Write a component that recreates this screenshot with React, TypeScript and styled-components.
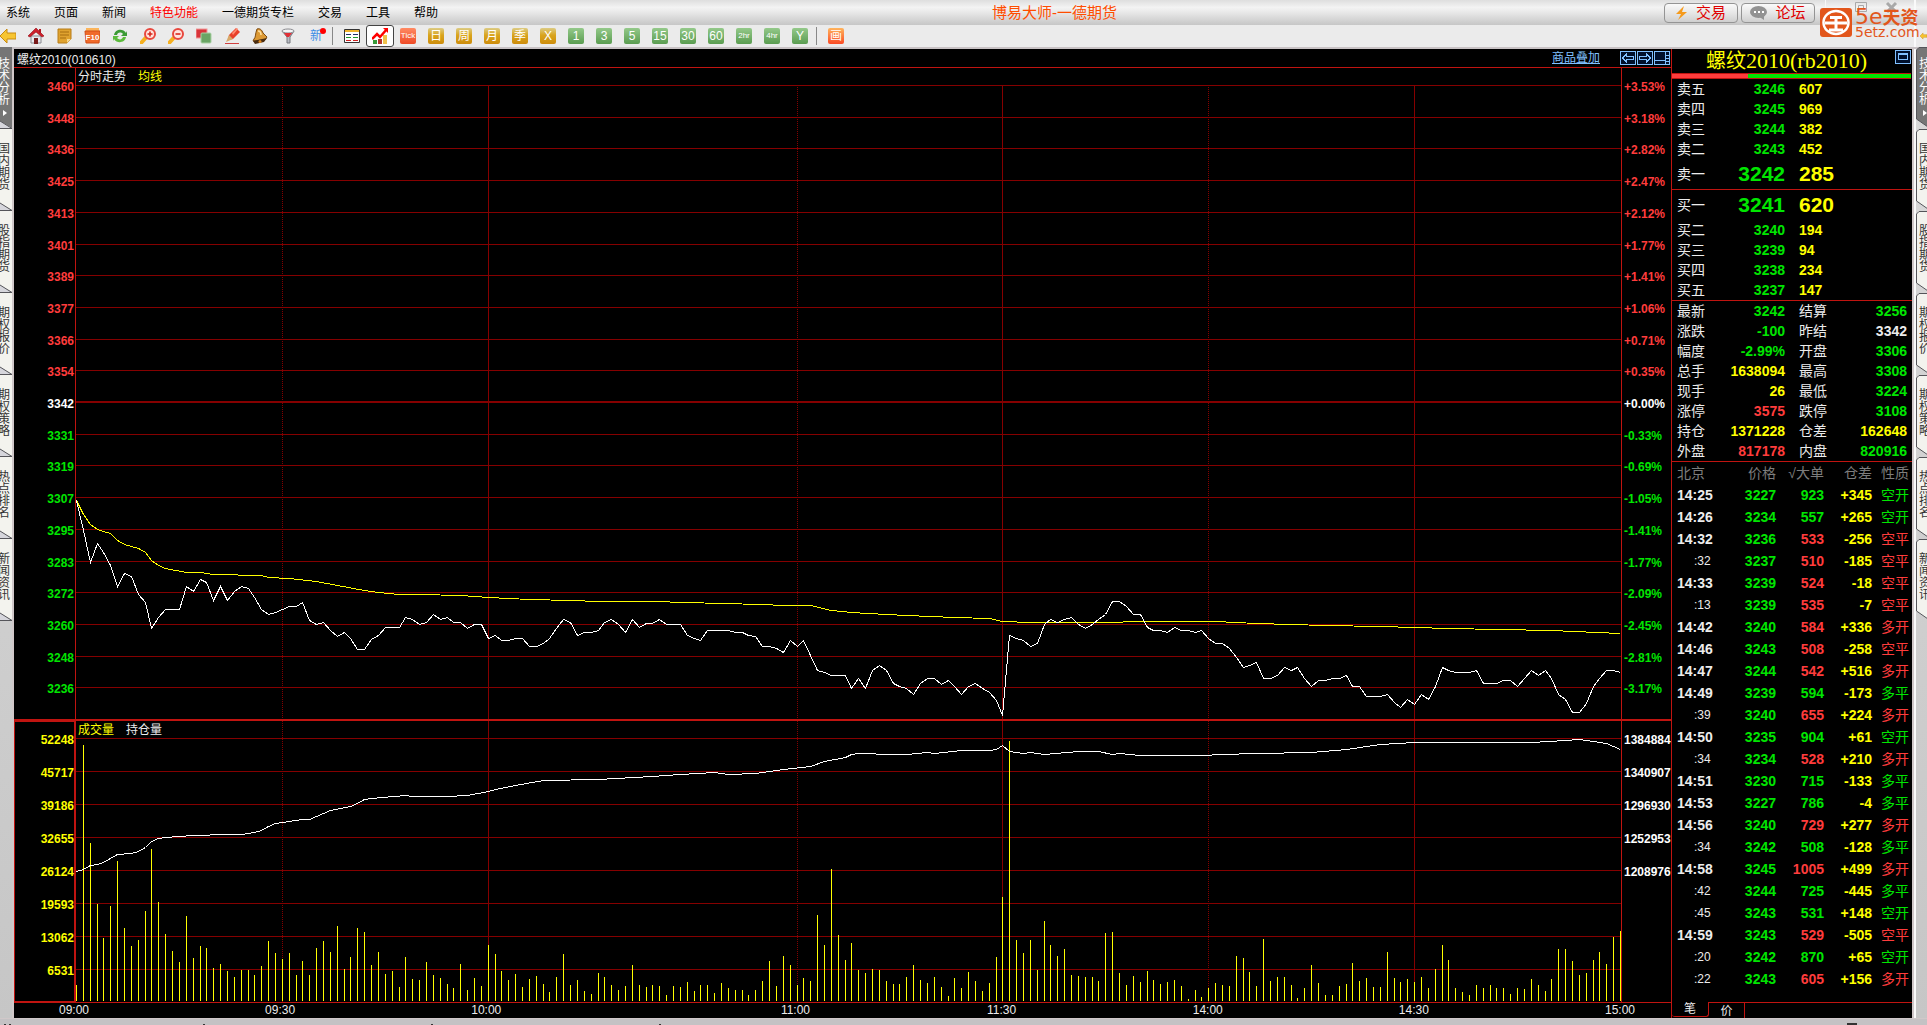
import React from "react";
import styled, { createGlobalStyle, css } from "styled-components";

const RED = "#ff3c3c";
const GREEN = "#00e600";
const YELLOW = "#ffff00";
const WHITE = "#ececec";
const LINE = "#c01410";
const GRID = "#850000";

/* ---------- data ---------- */

const menus = ["系统", "页面", "新闻", "特色功能", "一德期货专栏", "交易", "工具", "帮助"];
const sideTabs = ["技术分析", "国内期货", "股指期货", "期权报价", "期权策略", "热点排名", "新闻资讯"];

const priceLabels = [
  3460, 3448, 3436, 3425, 3413, 3401, 3389, 3377, 3366, 3354, 3342, 3331, 3319, 3307, 3295, 3283,
  3272, 3260, 3248, 3236,
];
const percentLabels = [
  "+3.53%", "+3.18%", "+2.82%", "+2.47%", "+2.12%", "+1.77%", "+1.41%", "+1.06%", "+0.71%",
  "+0.35%", "+0.00%", "-0.33%", "-0.69%", "-1.05%", "-1.41%", "-1.77%", "-2.09%", "-2.45%",
  "-2.81%", "-3.17%",
];
const volumeLabels = [52248, 45717, 39186, 32655, 26124, 19593, 13062, 6531];
const interestLabels = [1384884, 1340907, 1296930, 1252953, 1208976];

const MINUTES = 225;
const timeMarks: { minute: number; label: string }[] = [
  { minute: 0, label: "09:00" },
  { minute: 30, label: "09:30" },
  { minute: 60, label: "10:00" },
  { minute: 105, label: "11:00" },
  { minute: 135, label: "11:30" },
  { minute: 165, label: "14:00" },
  { minute: 195, label: "14:30" },
  { minute: 225, label: "15:00" },
];

const priceLine = [
  500, 530, 562, 543, 552, 565, 586, 573, 576, 594, 602, 628, 617, 609, 609, 609, 586, 591, 579,
  582, 600, 586, 600, 591, 586, 588, 597, 609, 614, 612, 609, 606, 606, 602, 620, 624, 622, 630,
  636, 632, 638, 649, 649, 639, 635, 627, 627, 627, 617, 619, 624, 622, 614, 619, 617, 622, 622,
  628, 624, 624, 638, 635, 640, 640, 638, 638, 646, 646, 643, 638, 628, 619, 622, 635, 632, 632,
  630, 622, 619, 624, 632, 619, 627, 623, 623, 619, 624, 624, 624, 635, 638, 640, 630, 630, 630,
  630, 632, 632, 635, 636, 646, 646, 648, 652, 640, 646, 640, 655, 670, 672, 675, 675, 675, 688,
  678, 688, 670, 665, 670, 683, 686, 688, 694, 683, 678, 678, 684, 680, 686, 694, 686, 683, 688,
  692, 700, 715, 635, 638, 640, 646, 643, 624, 619, 622, 619, 617, 624, 628, 624, 619, 614, 601,
  601, 606, 614, 614, 627, 630, 630, 632, 627, 630, 630, 632, 630, 638, 643, 643, 648, 657, 667,
  665, 662, 678, 678, 675, 667, 670, 667, 678, 686, 680, 680, 678, 678, 675, 686, 686, 696, 696,
  696, 694, 702, 707, 699, 704, 694, 699, 686, 667, 670, 672, 672, 672, 670, 683, 683, 683, 680,
  680, 686, 678, 670, 675, 670, 678, 694, 699, 712, 712, 703, 686, 678, 670, 670, 672,
];

const averageLine: [number, number][] = [
  [0, 500], [1, 514], [2, 524], [3, 529], [4, 531], [5, 533], [6, 540], [7, 544], [8, 546],
  [9, 548], [10, 552], [11, 560], [12, 565], [13, 568], [16, 572], [18, 572], [20, 574], [27, 575],
  [28, 577], [31, 578], [35, 581], [38, 585], [42, 590], [44, 592], [47, 594], [50, 594],
  [56, 595], [60, 597], [66, 599], [72, 600], [76, 601], [84, 601], [94, 603], [100, 604],
  [103, 605], [107, 605], [110, 610], [113, 612], [118, 614], [121, 615], [128, 617], [133, 618],
  [135, 621], [139, 622], [152, 622], [153, 621], [166, 621], [172, 623], [182, 625], [190, 626],
  [200, 628], [215, 630], [225, 633],
];

const interestLine: [number, number][] = [
  [0, 871], [1, 869], [2, 865], [3, 864], [4, 862], [5, 858], [6, 854], [8, 853], [9, 851],
  [10, 847], [11, 841], [12, 838], [13, 837], [15, 836], [17, 835], [19, 835], [20, 834],
  [24, 834], [26, 832], [27, 830], [28, 826], [29, 823], [30, 822], [33, 819], [34, 819],
  [35, 816], [37, 810], [40, 806], [41, 803], [42, 799], [43, 798], [48, 795], [49, 796],
  [54, 796], [57, 795], [60, 791], [61, 789], [64, 785], [68, 780], [76, 779], [84, 776],
  [88, 774], [93, 772], [95, 774], [99, 773], [103, 769], [107, 766], [109, 761], [112, 757],
  [113, 754], [114, 753], [116, 753], [117, 754], [121, 754], [124, 752], [125, 753], [129, 750],
  [133, 750], [134, 749], [135, 745], [136, 751], [138, 753], [139, 752], [141, 754], [146, 751],
  [149, 751], [151, 754], [152, 753], [155, 755], [164, 755], [167, 754], [172, 753], [180, 752],
  [185, 749], [190, 744], [195, 742], [206, 742], [212, 742], [217, 740], [219, 739], [221, 741],
  [223, 743], [224, 746], [225, 749],
];

const volumes = [
  16, 256, 158, 97, 63, 95, 140, 73, 55, 61, 90, 152, 99, 67, 50, 39, 85, 43, 55, 53, 33, 37, 30,
  24, 31, 31, 26, 35, 60, 48, 42, 48, 26, 40, 26, 53, 60, 49, 75, 32, 44, 73, 69, 36, 49, 27, 30,
  14, 44, 22, 21, 39, 26, 23, 17, 13, 37, 11, 23, 15, 56, 47, 30, 21, 27, 14, 22, 25, 17, 9, 24,
  47, 16, 21, 10, 7, 28, 24, 16, 11, 15, 36, 16, 14, 16, 15, 6, 15, 14, 19, 10, 16, 16, 8, 18, 13,
  11, 11, 6, 11, 20, 40, 15, 45, 36, 16, 23, 20, 86, 56, 132, 66, 41, 58, 31, 28, 32, 31, 20, 17,
  17, 24, 36, 21, 18, 24, 14, 5, 23, 13, 29, 20, 10, 18, 44, 104, 260, 61, 48, 61, 31, 80, 56, 45,
  52, 26, 25, 24, 24, 20, 68, 69, 28, 16, 25, 19, 30, 21, 17, 19, 21, 15, 2, 11, 4, 13, 18, 16,
  15, 45, 43, 29, 15, 62, 20, 24, 24, 16, 3, 13, 36, 18, 6, 6, 15, 17, 38, 20, 23, 14, 14, 49, 23,
  19, 22, 19, 24, 13, 32, 56, 41, 13, 9, 6, 16, 13, 16, 13, 13, 7, 13, 12, 22, 16, 10, 22, 52, 52,
  40, 26, 28, 41, 49, 37, 64, 70,
];

const asks: [string, number, number][] = [
  ["卖五", 3246, 607],
  ["卖四", 3245, 969],
  ["卖三", 3244, 382],
  ["卖二", 3243, 452],
  ["卖一", 3242, 285],
];
const bids: [string, number, number][] = [
  ["买一", 3241, 620],
  ["买二", 3240, 194],
  ["买三", 3239, 94],
  ["买四", 3238, 234],
  ["买五", 3237, 147],
];

type Stat = [string, string, string, string, string, string];
const stats: Stat[] = [
  ["最新", "3242", GREEN, "结算", "3256", GREEN],
  ["涨跌", "-100", GREEN, "昨结", "3342", WHITE],
  ["幅度", "-2.99%", GREEN, "开盘", "3306", GREEN],
  ["总手", "1638094", YELLOW, "最高", "3308", GREEN],
  ["现手", "26", YELLOW, "最低", "3224", GREEN],
  ["涨停", "3575", RED, "跌停", "3108", GREEN],
  ["持仓", "1371228", YELLOW, "仓差", "162648", YELLOW],
  ["外盘", "817178", RED, "内盘", "820916", GREEN],
];

type Tick = [string, number, number, string, string, string];
const ticks: Tick[] = [
  ["14:25", 3227, 923, "+345", "空开", GREEN],
  ["14:26", 3234, 557, "+265", "空开", GREEN],
  ["14:32", 3236, 533, "-256", "空平", RED],
  [":32", 3237, 510, "-185", "空平", RED],
  ["14:33", 3239, 524, "-18", "空平", RED],
  [":13", 3239, 535, "-7", "空平", RED],
  ["14:42", 3240, 584, "+336", "多开", RED],
  ["14:46", 3243, 508, "-258", "空平", RED],
  ["14:47", 3244, 542, "+516", "多开", RED],
  ["14:49", 3239, 594, "-173", "多平", GREEN],
  [":39", 3240, 655, "+224", "多开", RED],
  ["14:50", 3235, 904, "+61", "空开", GREEN],
  [":34", 3234, 528, "+210", "多开", RED],
  ["14:51", 3230, 715, "-133", "多平", GREEN],
  ["14:53", 3227, 786, "-4", "多平", GREEN],
  ["14:56", 3240, 729, "+277", "多开", RED],
  [":34", 3242, 508, "-128", "多平", GREEN],
  ["14:58", 3245, 1005, "+499", "多开", RED],
  [":42", 3244, 725, "-445", "多平", GREEN],
  [":45", 3243, 531, "+148", "空开", GREEN],
  ["14:59", 3243, 529, "-505", "空平", RED],
  [":20", 3242, 870, "+65", "空开", GREEN],
  [":22", 3243, 605, "+156", "多开", RED],
];

/* ---------- page frame ---------- */

const GlobalStyle = createGlobalStyle`
  * { box-sizing: border-box; }
  body {
    margin: 0;
    overflow: hidden;
    font-family: "Liberation Sans", "Noto Sans CJK SC", sans-serif;
    font-size: 12px;
    background: #d2d2d2;
  }
  button {
    font: inherit;
    color: inherit;
    background: none;
    border: 0;
    padding: 0;
    cursor: pointer;
  }
  ul, ol, h1, h2 { margin: 0; padding: 0; list-style: none; font-weight: normal; }
`;

const Page = styled.div`
  height: 100vh;
  display: flex;
  flex-direction: column;
`;

const MenuBar = styled.header`
  position: relative;
  height: 25px;
  flex: none;
  display: grid;
  grid-template-columns: 1fr auto 1fr;
  align-items: center;
  padding: 0 112px 0 6px;
  background: linear-gradient(#dedede, #f3f3f3 30%, #e9e9e9 48%, #c6c6c6);
`;

const Menu = styled.nav`
  display: flex;
  gap: 24px;
`;

const MenuItem = styled.button<{ $hot?: boolean }>`
  line-height: 24px;
  color: ${(p) => (p.$hot ? "#ff0000" : "#000")};
`;

const WindowTitle = styled.h1`
  padding-left: 288px;
  font-size: 15px;
  line-height: 24px;
  color: #ff4d00;
`;

const HeaderActions = styled.div`
  display: flex;
  justify-content: flex-end;
  gap: 3px;
`;

const ActionButton = styled.button`
  width: 74px;
  height: 20px;
  display: flex;
  align-items: center;
  justify-content: center;
  gap: 8px;
  border: 1px solid #949494;
  border-radius: 4px;
  background: linear-gradient(#fafafa, #e6e6e6 50%, #cfcfcf);
  color: #e00000;
  font-size: 15px;
  line-height: 18px;
`;

const WindowControls = styled.div`
  position: absolute;
  top: 0;
  right: 11px;
  display: flex;
  padding: 1px 14px 0 24px;
  border-left: 1px solid #f8f8f8;
  border-right: 2px solid #fafafa;
  height: 25px;
`;

const Brand = styled.div`
  position: absolute;
  z-index: 2;
  top: 8px;
  right: 4px;
  display: flex;
  gap: 3px;
  color: #e2561b;
`;

const BrandText = styled.div`
  width: 68px;
  white-space: nowrap;
`;

const BrandName = styled.div`
  display: flex;
  align-items: center;
  height: 17px;
  font: bold 18px/17px "Noto Sans CJK SC", sans-serif;
`;

const BrandMark = styled.span`
  font: 22px/17px "DejaVu Sans", sans-serif;
`;

const BrandSite = styled.div`
  font: 14px/14px "DejaVu Sans", sans-serif;
`;

/* ---------- tool bar ---------- */

const ToolBar = styled.div`
  height: 24px;
  flex: none;
  display: flex;
  background: #ebebeb;
  border-bottom: 2px solid #c8c2c4;
`;

const Tool = styled.button<{ $active?: boolean; $edge?: boolean }>`
  width: ${(p) => (p.$edge ? 22 : 28)}px;
  height: 22px;
  display: flex;
  align-items: center;
  justify-content: ${(p) => (p.$edge ? "flex-start" : "center")};
  border-radius: 3px;
  ${(p) =>
    p.$active &&
    css`
      background: #fff;
      border: 1px solid #444;
    `}
`;

const NextWindow = styled.div`
  width: 13px;
  margin-left: auto;
  display: flex;
  align-items: center;
  overflow: hidden;
  border-left: 2px solid #fafafa;
  padding-left: 4px;
`;

const ToolDivider = styled.span`
  width: 1px;
  height: 18px;
  margin: 2px 5px 0 2px;
  background: #888;
`;

const tones = {
  tick: "linear-gradient(#ff8a63, #ef4a26)",
  gold: "linear-gradient(#dccb84, #d9a41c 45%, #cd8c0c)",
  green: "linear-gradient(#94c98a, #5a9c50)",
  draw: "linear-gradient(#ffb45c, #fb4a24)",
};

const Period = styled.span<{ $tone: keyof typeof tones; $small?: boolean }>`
  width: 16px;
  height: 16px;
  border-radius: 2px;
  background: ${(p) => tones[p.$tone]};
  color: #fff;
  text-align: center;
  font-size: ${(p) => (p.$small ? 8 : 12)}px;
  line-height: 16px;
  white-space: nowrap;
`;

const NewLabel = styled.span`
  position: relative;
  color: #3b8de6;
  line-height: 20px;

  &::after {
    content: "";
    position: absolute;
    top: 2px;
    right: -4px;
    width: 6px;
    height: 6px;
    border-radius: 50%;
    background: #ff0000;
  }
`;

/* ---------- work area ---------- */

const WorkArea = styled.div`
  flex: 1;
  min-height: 0;
  display: flex;
  background: linear-gradient(#dadada, #c6c6c6);
`;

const TabRail = styled.nav<{ $right?: boolean }>`
  width: ${(p) => (p.$right ? 11 : 12)}px;
  flex: none;
  margin-top: -2px;
  display: flex;
  flex-direction: column;
  overflow: hidden;
`;

const RailTab = styled.button<{ $active?: boolean }>`
  position: relative;
  flex: none;
  width: 12px;
  height: 82px;
  padding-top: ${(p) => (p.$active ? 11 : 14)}px;
  display: flex;
  flex-direction: column;
  align-items: center;
  color: ${(p) => (p.$active ? "#fff" : "#333")};
  fill: ${(p) => (p.$active ? "#767676" : "#f3f3ee")};
  line-height: 12px;
`;

const RailShape = styled.svg`
  position: absolute;
  top: 0;
  left: 0;
`;

const RailText = styled.span<{ $right?: boolean }>`
  position: relative;
  width: 12px;
  margin-left: ${(p) => (p.$right ? 6 : -4)}px;
`;

const RailArrow = styled.span<{ $right?: boolean }>`
  position: relative;
  margin: 4px 0 0 ${(p) => (p.$right ? 6 : -2)}px;
  border: 3px solid transparent;
  border-left: 4px solid #fff;
  border-right: 0;
`;

const Terminal = styled.main`
  flex: 1;
  min-width: 0;
  display: flex;
  background: #000;
  border-left: 2px solid #d0c8c9;
  border-right: 2px solid #d0c8c9;
  color: ${WHITE};
`;

const FrameGap = styled.div`
  width: 2px;
  background: #fafafa;
`;

const StatusBar = styled.footer`
  height: 7px;
  flex: none;
  display: flex;
  align-items: flex-end;
  justify-content: space-between;
  padding: 0 68px 0 4px;
  border-top: 1px solid #d0c8c9;
  background: #c4c2c4;
`;

/* ---------- charts ---------- */

const ChartArea = styled.section`
  flex: 1;
  min-width: 0;
  display: flex;
  flex-direction: column;
`;

const ChartHeader = styled.div`
  height: 19px;
  flex: none;
  display: flex;
  align-items: center;
  justify-content: space-between;
  padding: 0 1px 0 3px;
  border-bottom: 1px solid ${LINE};
`;

const ChartTools = styled.div`
  display: flex;
  align-items: center;
  gap: 1px;
`;

const OverlayLink = styled.a`
  margin-right: 19px;
  color: #80c0ff;
  line-height: 18px;
`;

const BoxButton = styled.button`
  display: flex;
`;

const Panel = styled.div<{ $share: number; $framed?: boolean }>`
  flex: ${(p) => p.$share} 1 0;
  min-height: 0;
  display: grid;
  grid-template-columns: 62px 1fr 50px;
  ${(p) =>
    p.$framed &&
    css`
      border-top: 2px solid ${LINE};
      border-bottom: 1px solid ${LINE};
    `}
`;

const Axis = styled.ul<{ $side: "left" | "right"; $framed?: boolean }>`
  min-height: 0;
  display: flex;
  flex-direction: column;
  padding-top: 17px;
  padding-bottom: 0;
  ${(p) =>
    p.$side === "left"
      ? css`
          padding-right: 1px;
          text-align: right;
          border-right: 1px solid ${LINE};
        `
      : css`
          padding-left: 2px;
          text-align: left;
          border-left: 1px solid ${LINE};
        `}
  ${(p) => p.$framed && `box-shadow: inset 0 0 0 1px ${LINE};`}
`;

const AxisLabel = styled.li<{ $color: string }>`
  flex: 1 1 0;
  min-height: 0;
  color: ${(p) => p.$color};
  font-size: 12px;
  font-weight: bold;
  line-height: 4px;
  white-space: nowrap;
`;

const Plot = styled.div`
  position: relative;
  min-width: 0;
  min-height: 0;
`;

const PlotSvg = styled.svg`
  display: block;
  position: absolute;
  inset: 0;
  width: 100%;
  height: 100%;
  overflow: visible;
  fill: none;
  shape-rendering: crispEdges;

  path,
  polyline {
    vector-effect: non-scaling-stroke;
  }
`;

const Legend = styled.div`
  position: absolute;
  top: 0;
  left: 2px;
  display: flex;
  gap: 12px;
  line-height: 18px;
  color: ${WHITE};
`;

const LegendItem = styled.span<{ $color: string }>`
  color: ${(p) => p.$color};
`;

const TimeAxis = styled.ol`
  height: 15px;
  flex: none;
  position: relative;
  margin: 0 51px 0 60px;
`;

const TimeLabel = styled.li`
  position: absolute;
  top: 0;
  transform: translateX(-50%);
  line-height: 15px;
`;

/* ---------- quote panel ---------- */

const QuotePanel = styled.aside`
  width: 241px;
  flex: none;
  display: flex;
  flex-direction: column;
  border-left: 1px solid ${LINE};
`;

const QuoteHeader = styled.div`
  height: 24px;
  flex: none;
  display: flex;
  align-items: flex-start;
  padding: 1px 1px 0 34px;
`;

const QuoteTitle = styled.h2`
  flex: 1;
  color: ${YELLOW};
  font: 20px/22px "Liberation Serif", "Noto Sans CJK SC", serif;
`;

const TitleCode = styled.span`
  font-size: 22px;
`;

const StrengthBar = styled.div`
  height: 6px;
  flex: none;
  border-top: 1px solid ${LINE};
  border-bottom: 1px solid ${LINE};
  margin-right: 1px;
  background: linear-gradient(90deg, ${RED} 32%, ${GREEN} 32%);
`;

const QuoteTable = styled.table`
  width: 100%;
  table-layout: fixed;
  border-collapse: collapse;
  border-bottom: 1px solid ${LINE};

  th {
    padding: 0 0 0 5px;
    text-align: left;
    font-size: 14px;
    font-weight: normal;
  }
`;

const QuoteRow = styled.tr<{ $best?: boolean }>`
  height: ${(p) => (p.$best ? 30 : 20)}px;
  font-size: ${(p) => (p.$best ? 21 : 14)}px;
  line-height: 20px;

  th + td + th {
    padding-left: 14px;
  }
`;

const QuoteCell = styled.td<{ $color: string; $align?: "left" | "right"; $pad?: number }>`
  padding: 0;
  ${(p) => `padding-${p.$align ?? "right"}: ${p.$pad ?? 0}px;`}
  text-align: ${(p) => p.$align ?? "right"};
  color: ${(p) => p.$color};
  font-weight: bold;
`;

const TickTable = styled.table`
  width: 100%;
  table-layout: fixed;
  border-collapse: collapse;
  font-size: 14px;
  line-height: 20px;
  white-space: nowrap;

  tr {
    height: 22px;
  }

  th {
    padding: 0;
    color: #7d7d7d;
    font-weight: normal;
    text-align: right;
  }

  th:first-child {
    padding-left: 5px;
    text-align: left;
  }

  th:last-child {
    padding-left: 9px;
    text-align: left;
  }
`;

const TickCell = styled.td<{ $color: string }>`
  padding: 0;
  text-align: right;
  color: ${(p) => p.$color};
  font-weight: bold;
`;

const TickTime = styled.td<{ $sub: boolean }>`
  padding: 0 0 0 ${(p) => (p.$sub ? 22 : 5)}px;
  font-size: ${(p) => (p.$sub ? 12 : 14)}px;
  font-weight: ${(p) => (p.$sub ? "normal" : "bold")};
`;

const TickNature = styled.td<{ $color: string }>`
  padding: 0 0 0 9px;
  color: ${(p) => p.$color};
`;

const BottomTabs = styled.div`
  flex: none;
  height: 16px;
  margin-top: auto;
  display: flex;
`;

const BottomTab = styled.button<{ $active?: boolean }>`
  width: 36px;
  height: ${(p) => (p.$active ? 15 : 16)}px;
  line-height: 14px;
  border: 0 solid ${LINE};
  border-right-width: 1px;
  ${(p) =>
    p.$active
      ? "border-bottom-width: 1px; border-radius: 0 0 3px 3px; width: 37px;"
      : "border-top-width: 1px;"}
`;

const TabFiller = styled.div`
  flex: 1;
  border-top: 1px solid ${LINE};
`;

/* ---------- icons ---------- */

const backArrow = <path d="M0 8 7 1v4h9v6H7v4z" fill="#f7c531" stroke="#c88a10" />;

const toolIcons: { name: string; art: React.ReactNode }[] = [
  {
    name: "返回",
    art: backArrow,
  },
  {
    name: "首页",
    art: (
      <>
        <path d="M3 8h10v7H3z" fill="#e9e9ee" stroke="#8a8a90" />
        <path d="M0 8 8 0l8 8-2 1-6-5-6 5z" fill="#cf1f2b" stroke="#8e1018" strokeWidth=".6" />
        <path d="M11 1h2v4h-2z" fill="#b01822" />
        <path d="M6 10h4v6H6z" fill="#7a1a1a" />
      </>
    ),
  },
  {
    name: "公告",
    art: (
      <>
        <path d="M2 1h13v10l-4 4H2z" fill="#dfa22f" stroke="#b87d18" />
        <path d="M11 15v-4h4z" fill="#f6d68a" />
        <path d="M4 4h9M4 7h9M4 10h6" stroke="#a66c10" />
      </>
    ),
  },
  {
    name: "F10",
    art: (
      <>
        <path d="M2 0h13v3H2z" fill="#fbb45b" />
        <path d="M1 3h15l-1 12H2z" fill="#f06a2a" stroke="#d04c14" />
        <text x="8.5" y="12" fontSize="8" fontWeight="bold" textAnchor="middle" fill="#fff">
          F10
        </text>
      </>
    ),
  },
  {
    name: "刷新",
    art: (
      <>
        <path d="M2 7c1-6 9-7 12-2l1-2v5H9l2-2C9 4 6 4 5 7z" fill="#3b9a35" />
        <path d="M14 9c-1 6-9 7-12 2l-1 2V8h6l-2 2c2 2 5 2 6-1z" fill="#5cbb3c" />
      </>
    ),
  },
  {
    name: "放大",
    art: (
      <>
        <path d="M1.500 14.500 6 9.500" stroke="#f5b020" strokeWidth="4" strokeLinecap="round" />
        <circle cx="10" cy="6" r="5" fill="#ffe4de" stroke="#e8483e" strokeWidth="2" />
        <path d="M7.500 6h5M10 3.500v5" stroke="#d8281e" strokeWidth="1.600" />
      </>
    ),
  },
  {
    name: "缩小",
    art: (
      <>
        <path d="M1.500 14.500 6 9.500" stroke="#f5b020" strokeWidth="4" strokeLinecap="round" />
        <circle cx="10" cy="6" r="5" fill="#ffe4de" stroke="#e8483e" strokeWidth="2" />
        <path d="M7.500 6h5" stroke="#d8281e" strokeWidth="1.600" />
      </>
    ),
  },
  {
    name: "叠加",
    art: (
      <>
        <rect x="0" y="1" width="11" height="9" fill="#d9343a" stroke="#f09a9a" />
        <rect x="5" y="5" width="10" height="10" rx="1" fill="#6aa564" stroke="#a9d0a4" />
      </>
    ),
  },
  {
    name: "画笔",
    art: (
      <>
        <path d="m4 12 1-5 7-7 4 4-7 7z" fill="#e8402a" />
        <path d="M8 5l5-5 1 1-5 6z" fill="#ff8a70" />
        <path d="m2 14 3-7 4 4z" fill="#d8a868" />
        <path d="M1 15.500h14" stroke="#d04040" />
      </>
    ),
  },
  {
    name: "预警",
    art: (
      <>
        <path d="M5 1c3-1 5 1 6 4l4 4-2 3-12 1 1-2c2-2 1-5 3-10z" fill="#dd9a35" stroke="#7c4a10" />
        <path d="M6 3c2 0 3 2 3 4" stroke="#ffe0a0" strokeWidth="1.500" />
        <path d="m1 13 14-3-3 4-9 2z" fill="#4a2c10" />
        <circle cx="8" cy="13.500" r="1.500" fill="#e08a20" />
      </>
    ),
  },
  {
    name: "筛选",
    art: (
      <>
        <path d="M2 3h12l-4 6v6H7V9z" fill="#b9bcc4" stroke="#74777d" />
        <ellipse cx="8" cy="3" rx="6" ry="2" fill="#f4f4f6" stroke="#8a8a8e" />
        <path d="M4 5h8l-3 4H7z" fill="#e22f36" />
      </>
    ),
  },
];

const periods: { text: string; tone: keyof typeof tones; small?: boolean }[] = [
  { text: "Tick", tone: "tick", small: true },
  { text: "日", tone: "gold" },
  { text: "周", tone: "gold" },
  { text: "月", tone: "gold" },
  { text: "季", tone: "gold" },
  { text: "X", tone: "gold" },
  { text: "1", tone: "green" },
  { text: "3", tone: "green" },
  { text: "5", tone: "green" },
  { text: "15", tone: "green" },
  { text: "30", tone: "green" },
  { text: "60", tone: "green" },
  { text: "2hr", tone: "green", small: true },
  { text: "4hr", tone: "green", small: true },
  { text: "Y", tone: "green" },
];

function Icon({ children, size = 16 }: { children: React.ReactNode; size?: number }) {
  return (
    <svg width={size} height={size} viewBox="0 0 16 16" fill="none" aria-hidden="true">
      {children}
    </svg>
  );
}

function BoxIcon({ d }: { d: string }) {
  return (
    <svg width="16" height="14" viewBox="0 0 16 14" fill="none" shapeRendering="crispEdges">
      <path d="M.5.5h15v13H.5z" fill="#00102c" stroke="#80c0ff" />
      <path d={d} stroke="#80c0ff" />
    </svg>
  );
}

/* ---------- chart pieces ---------- */

const PLOT_W = 1545;
const xAt = (minute: number) => Math.round((minute * (PLOT_W - 1)) / MINUTES) + 0.5;
const PRICE = { top: 68, height: 651, rows: 20 };
const VOLUME = { top: 721, height: 281, rows: 8 };
const LEGEND_H = 17;

const toPoints = (line: [number, number][], top: number) =>
  line.map(([minute, y]) => `${xAt(minute)},${y - top + 0.5}`).join(" ");

function Grid({ height, rows, from }: { height: number; rows: number; from: number }) {
  const step = (height - LEGEND_H) / rows;
  const horizontals = Array.from(
    { length: rows },
    (_, i) => `M0 ${Math.round(LEGEND_H + i * step) + 0.5}H${PLOT_W}`,
  ).join("");
  const verticals = (minutes: number[]) =>
    minutes.map((m) => `M${xAt(m)} ${from}V${height}`).join("");
  return (
    <>
      <path d={horizontals} stroke={GRID} />
      <path d={verticals([60, 135, 195])} stroke={GRID} />
      <path d={verticals([30, 105, 165])} stroke={GRID} strokeDasharray="1 1" />
    </>
  );
}

function PriceChart() {
  return (
    <Panel $share={PRICE.height}>
      <Axis $side="left">
        {priceLabels.map((v) => (
          <AxisLabel key={v} $color={v > 3342 ? RED : v < 3342 ? GREEN : "#fff"}>
            {v}
          </AxisLabel>
        ))}
      </Axis>
      <Plot>
        <PlotSvg viewBox={`0 0 ${PLOT_W} ${PRICE.height}`} preserveAspectRatio="none">
          <Grid height={PRICE.height} rows={PRICE.rows} from={LEGEND_H} />
          <path d={`M0 334H${PLOT_W}`} stroke={GRID} strokeWidth="2" />
          <polyline points={toPoints(averageLine, PRICE.top)} stroke={YELLOW} />
          <polyline
            points={toPoints(priceLine.map((y, i) => [i, y]), PRICE.top)}
            stroke="#fff"
          />
        </PlotSvg>
        <Legend>
          <LegendItem $color={WHITE}>分时走势</LegendItem>
          <LegendItem $color={YELLOW}>均线</LegendItem>
        </Legend>
      </Plot>
      <Axis $side="right">
        {percentLabels.map((v) => (
          <AxisLabel key={v} $color={v === "+0.00%" ? "#fff" : v[0] === "+" ? RED : GREEN}>
            {v}
          </AxisLabel>
        ))}
      </Axis>
    </Panel>
  );
}

function VolumeChart() {
  const base = VOLUME.height - 1;
  return (
    <Panel $share={VOLUME.height} $framed>
      <Axis $side="left" $framed>
        {volumeLabels.map((v) => (
          <AxisLabel key={v} $color={YELLOW}>
            {v}
          </AxisLabel>
        ))}
      </Axis>
      <Plot>
        <PlotSvg viewBox={`0 0 ${PLOT_W} ${VOLUME.height}`} preserveAspectRatio="none">
          <Grid height={VOLUME.height} rows={VOLUME.rows} from={0} />
          <path d={volumes.map((v, i) => `M${xAt(i)} ${base}v${-v}`).join("")} stroke={YELLOW} />
          <polyline points={toPoints(interestLine, VOLUME.top)} stroke="#fff" />
        </PlotSvg>
        <Legend>
          <LegendItem $color={YELLOW}>成交量</LegendItem>
          <LegendItem $color={WHITE}>持仓量</LegendItem>
        </Legend>
      </Plot>
      <Axis $side="right">
        {Array.from({ length: VOLUME.rows }, (_, i) => (
          <AxisLabel key={i} $color="#fff">
            {interestLabels[i]}
          </AxisLabel>
        ))}
      </Axis>
    </Panel>
  );
}

function Rail({ right }: { right?: boolean }) {
  return (
    <TabRail $right={right}>
      {sideTabs.map((name, i) => (
        <RailTab key={name} $active={i === 0}>
          <RailShape width="12" height="82" viewBox="0 0 12 82" aria-hidden="true">
            {right ? (
              <path d="M12 .5H3L.5 3v69L12 80" stroke="#55555a" />
            ) : (
              <>
                <path d="M0 0h12v81L0 74z" />
                <path d="m0 74 12 7.500H0" fill="#d6d6dc" stroke="#55555a" />
              </>
            )}
          </RailShape>
          <RailText $right={right}>{name}</RailText>
          {i === 0 && <RailArrow $right={right} />}
        </RailTab>
      ))}
    </TabRail>
  );
}

function BookTable({ rows, best }: { rows: [string, number, number][]; best: number }) {
  return (
    <QuoteTable>
      <colgroup>
        <col style={{ width: 40 }} />
        <col style={{ width: 73 }} />
        <col />
      </colgroup>
      <tbody>
        {rows.map(([name, price, size], i) => (
          <QuoteRow key={name} $best={i === best}>
            <th scope="row">{name}</th>
            <QuoteCell $color={GREEN}>{price}</QuoteCell>
            <QuoteCell $color={YELLOW} $align="left" $pad={14}>
              {size}
            </QuoteCell>
          </QuoteRow>
        ))}
      </tbody>
    </QuoteTable>
  );
}

export default function App() {
  return (
    <Page>
      <GlobalStyle />
      <MenuBar>
        <Menu>
          {menus.map((m) => (
            <MenuItem key={m} $hot={m === "特色功能"}>
              {m}
            </MenuItem>
          ))}
        </Menu>
        <WindowTitle>博易大师-一德期货</WindowTitle>
        <HeaderActions>
          <ActionButton>
            <svg width="12" height="14" viewBox="0 0 12 14" aria-hidden="true">
              <path d="M8 0 0 8h5l-3 6 9-8H6z" fill="#f59a1c" />
            </svg>
            交易
          </ActionButton>
          <ActionButton>
            <svg width="17" height="14" viewBox="0 0 17 14" aria-hidden="true">
              <ellipse cx="8.500" cy="6" rx="8.500" ry="6" fill="#929292" />
              <path d="m8 10 6 4v-5z" fill="#929292" />
              <path d="M4 5h2v2H4zM8 5h2v2H8zM12 5h2v2h-2z" fill="#fff" />
            </svg>
            论坛
          </ActionButton>
        </HeaderActions>
        <WindowControls>
          <svg width="50" height="12" viewBox="0 0 50 12" fill="none" aria-hidden="true">
            <path d="M5.500 1.500h11v9h-11zM8.500 4.500h5v3h-5z" stroke="#a9a9a9" />
            <path d="m37 2 9 9m0-9-9 9" stroke="#a9a9a9" strokeWidth="3" />
          </svg>
        </WindowControls>
        <Brand>
          <svg width="32" height="29" viewBox="0 0 32 29" fill="none" aria-hidden="true">
            <rect width="32" height="29" rx="3" fill="#e2561b" />
            <ellipse cx="16" cy="14.500" rx="12.500" ry="11.500" stroke="#fff" strokeWidth="2.500" />
            <path d="M10 9.500h12M5 15h22M16 9v14M9 22h14" stroke="#fff" strokeWidth="3" />
          </svg>
          <BrandText>
            <BrandName>
              <BrandMark>5e</BrandMark>天资
            </BrandName>
            <BrandSite>5etz.com</BrandSite>
          </BrandText>
        </Brand>
      </MenuBar>

      <ToolBar>
        {toolIcons.map(({ name, art }, i) => (
          <Tool key={name} aria-label={name} $edge={i === 0}>
            <Icon>{art}</Icon>
          </Tool>
        ))}
        <Tool>
          <NewLabel>新</NewLabel>
        </Tool>
        <ToolDivider />
        <Tool aria-label="报价列表">
          <Icon>
            <path d="M.5 1.500h15v13H.5z" fill="#fff" stroke="#333" />
            <path d="M1 2h14v2H1z" fill="#f0b42c" />
            <path d="M2 6.500h5M9 6.500h5" stroke="#20306a" />
            <path d="M2 9.500h5M9 9.500h5" stroke="#1d9a2c" />
            <path d="M2 12.500h5M9 12.500h5" stroke="#d02020" />
          </Icon>
        </Tool>
        <Tool aria-label="分时图" $active>
          <Icon>
            <path d="M1 12h4v4H1z" fill="#3a9a3a" />
            <path d="M6 11h4v5H6z" fill="#b5342c" />
            <path d="M11 7h4v9h-4z" fill="#efc24c" />
            <path d="m0 11 5-5 3 3 7-8" stroke="#ff0000" strokeWidth="2.500" />
            <path d="M11 0h5v5z" fill="#ff0000" />
          </Icon>
        </Tool>
        {periods.map((p) => (
          <Tool key={p.text}>
            <Period $tone={p.tone} $small={p.small}>
              {p.text}
            </Period>
          </Tool>
        ))}
        <ToolDivider />
        <Tool>
          <Period $tone="draw">画</Period>
        </Tool>
        <NextWindow>
          <Icon>{backArrow}</Icon>
        </NextWindow>
      </ToolBar>

      <WorkArea>
        <Rail />
        <Terminal>
          <ChartArea>
            <ChartHeader>
              <span>螺纹2010(010610)</span>
              <ChartTools>
                <OverlayLink href="#overlay">商品叠加</OverlayLink>
                <BoxButton aria-label="上一个">
                  <BoxIcon d="M2.500 7 6.500 3v2.500h7v3h-7V11z" />
                </BoxButton>
                <BoxButton aria-label="下一个">
                  <BoxIcon d="M13.500 7 9.500 3v2.500h-7v3h7V11z" />
                </BoxButton>
                <BoxButton aria-label="布局">
                  <BoxIcon d="M11.500 0v14M0 9.500h11M12 4.500h3M12 7.500h3M12 10.500h3" />
                </BoxButton>
              </ChartTools>
            </ChartHeader>
            <PriceChart />
            <VolumeChart />
            <TimeAxis>
              {timeMarks.map(({ minute, label }) => (
                <TimeLabel key={label} style={{ left: `${(minute / MINUTES) * 100}%` }}>
                  {label}
                </TimeLabel>
              ))}
            </TimeAxis>
          </ChartArea>

          <QuotePanel>
            <QuoteHeader>
              <QuoteTitle>
                螺纹<TitleCode>2010(rb2010)</TitleCode>
              </QuoteTitle>
              <BoxButton aria-label="最大化">
                <BoxIcon d="M3.500 3.500h9v6h-9zM3.500 4.500h9" />
              </BoxButton>
            </QuoteHeader>
            <StrengthBar />
            <BookTable rows={asks} best={4} />
            <BookTable rows={bids} best={0} />
            <QuoteTable>
              <colgroup>
                <col style={{ width: 40 }} />
                <col style={{ width: 73 }} />
                <col style={{ width: 50 }} />
                <col />
              </colgroup>
              <tbody>
                {stats.map(([a, av, ac, b, bv, bc]) => (
                  <QuoteRow key={a}>
                    <th scope="row">{a}</th>
                    <QuoteCell $color={ac}>{av}</QuoteCell>
                    <th scope="row">{b}</th>
                    <QuoteCell $color={bc} $pad={5}>
                      {bv}
                    </QuoteCell>
                  </QuoteRow>
                ))}
              </tbody>
            </QuoteTable>
            <TickTable>
              <colgroup>
                <col style={{ width: 56 }} />
                <col style={{ width: 48 }} />
                <col style={{ width: 48 }} />
                <col style={{ width: 48 }} />
                <col />
              </colgroup>
              <thead>
                <tr>
                  <th scope="col">北京</th>
                  <th scope="col">价格</th>
                  <th scope="col">√大单</th>
                  <th scope="col">仓差</th>
                  <th scope="col">性质</th>
                </tr>
              </thead>
              <tbody>
                {ticks.map(([time, price, size, diff, nature, color], i) => (
                  <tr key={i}>
                    <TickTime $sub={time[0] === ":"}>{time}</TickTime>
                    <TickCell $color={GREEN}>{price}</TickCell>
                    <TickCell $color={color}>{size}</TickCell>
                    <TickCell $color={YELLOW}>{diff}</TickCell>
                    <TickNature $color={color}>{nature}</TickNature>
                  </tr>
                ))}
              </tbody>
            </TickTable>
            <BottomTabs>
              <BottomTab $active>笔</BottomTab>
              <BottomTab>价</BottomTab>
              <TabFiller />
            </BottomTabs>
          </QuotePanel>
        </Terminal>
        <FrameGap />
        <Rail right />
      </WorkArea>
      <StatusBar>
        <svg width="660" height="1" fill="#333" aria-hidden="true">
          <path d="M0 0h2v1H0zM5 0h2v1H5zM199 0h2v1h-2zM427 0h2v1h-2zM655 0h2v1h-2z" />
        </svg>
        <svg width="12" height="2" fill="#333" aria-hidden="true">
          <path d="M0 0h10v2H0z" />
        </svg>
      </StatusBar>
    </Page>
  );
}
